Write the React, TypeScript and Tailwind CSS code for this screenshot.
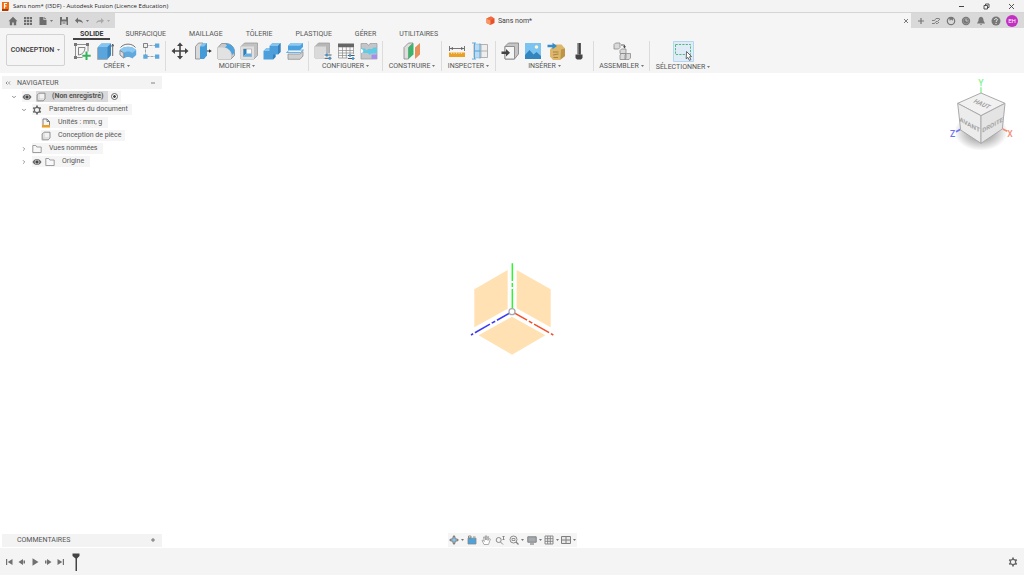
import type { ReactNode } from 'react';
import { ChevronDown, ChevronRight } from 'lucide-react';

function Icon({ children, size = 'size-[18px]', box = '0 0 18 18' }: { children: ReactNode; size?: string; box?: string }) {
  return (
    <svg viewBox={box} className={`${size} shrink-0`} fill="none" aria-hidden="true">
      {children}
    </svg>
  );
}

function Caret({ tone = 'text-[#777]' }: { tone?: string }) {
  return (
    <svg viewBox="0 0 6 4" className={`h-[2px] w-[3px] shrink-0 ${tone}`} aria-hidden="true">
      <path d="M0 0h6L3 4z" fill="currentColor" />
    </svg>
  );
}

const small = 'size-[10px]';

/* Ribbon icons */

const SketchIcon = () => (
  <Icon>
    <path d="M2.5 2.5h12M2.5 2.5v13M15 2.5v7M2.5 15.5h7" stroke="#777" strokeWidth=".8" />
    <path d="M5.5 13V5.5h6.500c0 4-2.500 7-6.500 7.500z" stroke="#777" strokeWidth=".9" />
    <path d="M1 1h3v3H1zM13 1h3v3h-3zM1 14h3v3H1z" fill="#777" />
    <path d="M12.500 9.500h2v3.200h3.200v2h-3.200V18h-2v-3.300H9.300v-2h3.200z" fill="#35b35a" />
  </Icon>
);

const ExtrudeIcon = () => (
  <Icon>
    <path d="M2 5 5.500 1.500h9.500v11.500L11.500 17H2z" fill="#5aa5dc" />
    <path d="M2 5 5.500 1.500h9.500L11.500 5z" fill="#85c4f0" />
    <path d="M11.500 5 15 1.500v11.500L11.500 17z" fill="#3c86bf" />
    <path d="M1.500 5.500v12H11.500" stroke="#999" strokeWidth=".8" />
    <path d="M16.700 14V3m-1.200 1.500L16.700 2l1.200 2.500" stroke="#444" strokeWidth=".8" />
  </Icon>
);

const RevolveIcon = () => (
  <Icon>
    <path d="M1.500 5.500C5 1 13 1 16.500 5.500" stroke="#777" strokeWidth="1" />
    <path d="M.8 8c4-4.500 12.400-4.500 16.400 0v5l-4 3.500c-2-2-6.400-2-8.400 0L.8 13z" fill="#5fa9df" />
    <path d="M.8 8c4-4.500 12.400-4.500 16.400 0l-4 3c-2-2-6.400-2-8.400 0z" fill="#8ac8f2" />
    <path d="M1 8.500 4.800 11v5L1 13z" fill="#dcdcdc" stroke="#777" strokeWidth=".7" />
  </Icon>
);

const PatternIcon = () => (
  <Icon>
    <path d="M3.500 3.500h12M3.500 3.500v11h12" stroke="#999" strokeWidth=".9" strokeDasharray="3 1" />
    <path d="M1.500 1.500h4v4h-4z" fill="#eee" stroke="#777" strokeWidth=".9" />
    <path d="M13 1.500h4.300v4.300H13zM1.300 12.500h4.300v4.300H1.300zM13 12.500h4.300v4.300H13z" fill="#5ca7dd" />
  </Icon>
);

const MoveIcon = () => (
  <Icon>
    <path d="M9 2.500v13M2.500 9h13" stroke="#444" strokeWidth="1.600" />
    <path d="M9 .5 12 4H6zM9 17.500 6 14h6zM.5 9 4 6v6zM17.500 9 14 12V6z" fill="#444" />
  </Icon>
);

const PressPullIcon = () => (
  <Icon>
    <path d="M1.500 4.500 4.500 1H9v12.500L6 17H1.500z" fill="#d9d9d9" stroke="#888" strokeWidth=".8" />
    <path d="M6 4.500 9 1h4v12.500L10 17H6z" fill="#439bd8" />
    <path d="M6 4.500 9 1h4l-3 3.500z" fill="#83c3ee" />
    <path d="M13 9h3" stroke="#333" />
    <path d="m15 7.200 2.800 1.800L15 10.800z" fill="#333" />
  </Icon>
);

const FilletIcon = () => (
  <Icon>
    <path d="M1 17V5.500L4.500 1.500H9c5 0 8.500 4 8.500 8v4L14 17z" fill="#c9c9c9" stroke="#888" strokeWidth=".8" />
    <path d="M1 5.500h4.500c5 0 8.500 3.500 8.500 8V17H1z" fill="#e2e2e2" />
    <path d="M8 1.500h1c5 0 8.500 4 8.500 8v1.500L15 13c-.5-3.500-3-6.500-7-7.500l2-2z" fill="#4ba3df" />
  </Icon>
);

const ShellIcon = () => (
  <Icon>
    <path d="M1 4.500 4.500 1h13v12.500L14 17H1z" fill="#c2c2c2" stroke="#9b9b9b" strokeWidth=".8" />
    <path d="M1 4.500h13V17H1z" fill="#e0e0e0" />
    <path d="M3.500 7h8v7.500h-8z" fill="#fff" stroke="#999" strokeWidth=".6" />
    <path d="M3.500 7h3v4.500l-3 3z" fill="#2f7fb8" />
    <path d="m3.500 14.500 3-3h5v3z" fill="#62b1e6" />
  </Icon>
);

const CombineIcon = () => (
  <Icon>
    <path d="M.5 9 3.500 6h3V4L9.500 1h8v9L15 12.500h-2.500v2.500L10 17.500H.5z" fill="#4c9fda" />
    <path d="M6.500 4 9.500 1h8L15 4zM.5 9 3.500 6h3v3z" fill="#84c4ef" />
    <path d="M15 4 17.500 1v9L15 12.500zM12.500 12.500v2.500L10 17.500v-5z" fill="#367fb8" />
  </Icon>
);

const SplitIcon = () => (
  <Icon>
    <path d="M2 3.800 5 1h12v4l-3 3H2z" fill="#4ba1dd" />
    <path d="M2 3.800 5 1h12l-3 2.800z" fill="#8dcaf2" />
    <path d="M.5 10.500 3.500 8h14l-3 2.500z" fill="#e7f4fd" stroke="#4ba1dd" strokeWidth=".8" />
    <path d="M2 12h12l3-2.500V14l-3 3.300H2z" fill="#cfcfcf" stroke="#888" strokeWidth=".7" />
  </Icon>
);

const ConfigureIcon = () => (
  <Icon>
    <path d="M1 4.500 4.500 1h11v11L12 16H1z" fill="#b7b7b7" stroke="#999" strokeWidth=".7" />
    <path d="M1 4.500h11V16H1z" fill="#dadada" />
    <path d="M10 11.500h8V18h-8z" fill="#f5f5f5" />
    <path d="M10.500 13h7M10.500 16.300h7" stroke="#555" strokeWidth="1" />
    <path d="M11.800 11.500h2v3h-2zM14.800 14.800h2v3h-2z" fill="#3d94d1" />
  </Icon>
);

const ConfigTableIcon = () => (
  <Icon>
    <path d="M1.500 5h15v11h-15zM1.500 8.500h15M1.500 11h15M1.500 13.500h15M5.500 5v11M9.300 5v11M13 5v11" fill="#fafafa" stroke="#888" strokeWidth=".7" />
    <path d="M1 1.500h16v3.500H1z" fill="#666" />
    <path d="M10.500 12h7.500v6h-7.500z" fill="#f5f5f5" />
    <path d="M11 13.500h6.500M11 16.500h6.500" stroke="#555" />
    <path d="M12 12.300h2v2.500h-2zM15 15.300h2v2.500h-2z" fill="#3d94d1" />
  </Icon>
);

const PuzzleIcon = () => (
  <Icon>
    <path d="M1 1.500h6l1.500 2 1.500-2h7V17H1z" fill="#c3c5c9" stroke="#999" strokeWidth=".7" />
    <path d="M1 6.500h4l1.500 2L8 7h4l1.500-1.500H17v6h-6l-1.500 1.500L8 11H1z" fill="#5fcbe4" />
    <path d="M11.500 12.500H17v4.300h-5.500z" fill="#a48cf0" />
    <path d="M1 7c3 0 3 4 0 4z" fill="#fff" />
  </Icon>
);

const PlaneIcon = () => (
  <Icon>
    <path d="M1 5.500 5.500 1H10L5.500 5.500V17H1z" fill="#ddd" stroke="#888" strokeWidth=".8" />
    <path d="m5.500 5.500 5-4.500v11.500l-5 4.500z" fill="#3bb56c" />
    <path d="m12 5.500 5-4.500v11.500L12 17z" fill="#e8905a" />
  </Icon>
);

const MeasureIcon = () => (
  <Icon>
    <path d="M1.500 4v5M16.500 4v5M2 6.500h14" stroke="#666" strokeWidth=".9" />
    <path d="m2 6.500 3-1.600v3.200zM16 6.500l-3-1.600v3.200z" fill="#666" />
    <path d="M1 10.500h16V15H1z" fill="#eba021" />
    <path d="M3.500 10.500v1.500M6 10.500v1.500M8.500 10.500v1.500M11 10.500v1.500M13.500 10.500v1.500" stroke="#fff" strokeWidth=".6" />
  </Icon>
);

const SectionIcon = () => (
  <Icon>
    <path d="M3 2.500h13.500v13H3zM3 9h13.500M10 2.500v13" fill="#eee" stroke="#aaa" strokeWidth=".9" />
    <path d="M4 1.500h5v15H4z" fill="#a9d4f1" fillOpacity=".75" />
    <path d="M1 1h4M1 17h4M3.500 1v16M9 1.500v15M3.500 9H9" stroke="#55a3da" strokeWidth=".9" />
  </Icon>
);

const InsertIcon = () => (
  <Icon>
    <path d="M4 4.500 7.500 1h10v11L13.500 17H4z" fill="#c5c5c5" stroke="#888" strokeWidth=".9" />
    <path d="M4 4.500h9.500V17H4z" fill="#f5f5f5" stroke="#888" strokeWidth=".9" />
    <path d="M.5 9.500h4.500V7l4 3.800-4 3.700V12H.500z" fill="#444" />
  </Icon>
);

const ImageIcon = () => (
  <Icon>
    <path d="M1 1h16v16H1z" fill="#7bc3f0" />
    <path d="m1 13 4.500-5 4 4.500L12.500 10l4.500 4v3H1z" fill="#3386bd" />
    <circle cx="12.500" cy="5" r="1.800" fill="#fff5cf" />
  </Icon>
);

const StoreIcon = () => (
  <Icon>
    <path d="M3 7.500 7.500 2.500h7l3.500 4v7.500l-5 4H6l-3-3.500z" fill="#dcb76c" />
    <path d="m14 7.500 4-1v7.500l-4.500 3.500z" fill="#bd9448" />
    <path d="M6 10h5.500M6 13l5.500-1M6.500 15.500H11" stroke="#9a7537" strokeWidth=".8" />
    <path d="M.5 2.800h5V.8L10 4 5.500 7.300v-2h-5z" fill="#348dcb" />
  </Icon>
);

const BoltIcon = () => (
  <Icon>
    <path d="M7.300 1h3.400v11.500H7.300z" fill="#777" />
    <path d="M9 1h1.700v11.500H9z" fill="#444" />
    <path d="M5.500 12.500h7v3.500L11 17.500H7L5.500 16z" fill="#444" />
  </Icon>
);

const AssembleIcon = () => (
  <Icon>
    <g fill="#dadada" stroke="#8a8a8a" strokeWidth=".8">
      <path d="m1 2.500 1.500-1.500H7v4.500L5.500 7H1z" />
      <path d="M7 8.500 8.500 7H13v4.500H7zM7 13l1.500-1.500H13V16l-1 1.500H7zM12 13l1.500-1.500h4V16l-1.500 1.500h-4z" />
    </g>
    <path d="M8 3h3.500v2" stroke="#555" strokeWidth=".9" />
    <path d="M10 4.300h3L11.500 6.500z" fill="#444" />
  </Icon>
);

const SelectIcon = () => (
  <Icon size="size-[21px]" box="0 0 21 21">
    <path d="M.5.500h20v20H.500z" fill="#dfecf7" stroke="#b5d6ef" />
    <path d="M2.500 3.500h15v10h-15z" stroke="#4fb978" strokeDasharray="2.200 1.200" />
    <path d="m13.500 10.500 5 5-2 .3 1.400 2.800-1.500.8-1.500-3-1.700 1.400z" fill="#fff" stroke="#444" strokeWidth=".8" />
  </Icon>
);

type Group = { label: string; width: string; tools: [string, () => ReactNode][] };

const groups: Group[] = [
  { label: 'CRÉER', width: 'w-[98px]', tools: [['Esquisse', SketchIcon], ['Extrusion', ExtrudeIcon], ['Révolution', RevolveIcon], ['Réseau', PatternIcon]] },
  { label: 'MODIFIER', width: 'w-[143px]', tools: [['Déplacer', MoveIcon], ['Appuyer/Tirer', PressPullIcon], ['Congé', FilletIcon], ['Coque', ShellIcon], ['Combiner', CombineIcon], ['Scinder', SplitIcon]] },
  { label: 'CONFIGURER', width: 'w-[74px]', tools: [['Configurer', ConfigureIcon], ['Table', ConfigTableIcon], ['Règles', PuzzleIcon]] },
  { label: 'CONSTRUIRE', width: 'w-[59px]', tools: [['Plan', PlaneIcon]] },
  { label: 'INSPECTER', width: 'w-[54px]', tools: [['Mesurer', MeasureIcon], ['Coupe', SectionIcon]] },
  { label: 'INSÉRER', width: 'w-[98px]', tools: [['Insérer', InsertIcon], ['Image', ImageIcon], ['Catalogue', StoreIcon], ['Fixation', BoltIcon]] },
  { label: 'ASSEMBLER', width: 'w-[56px]', tools: [['Assembler', AssembleIcon]] },
  { label: 'SÉLECTIONNER', width: 'w-[66px]', tools: [['Sélectionner', SelectIcon]] },
];

const tabs = ['SOLIDE', 'SURFACIQUE', 'MAILLAGE', 'TÔLERIE', 'PLASTIQUE', 'GÉRER', 'UTILITAIRES'];

function TitleBar() {
  return (
    <header className="flex h-3 items-center bg-[#f3f3f3] pl-[1px] font-['Open_Sans',sans-serif] text-[6px] text-[#222]">
      <Icon size="size-[9px]" box="0 0 9 9">
        <path d="M1 0h7v8L7 9H1z" fill="#f06a12" />
        <path d="M1 7h6v2H1z" fill="#a83a06" />
        <path d="M3.500 6.500v-5H6M3.500 4h2" stroke="#fff" strokeWidth="1.200" />
      </Icon>
      <h1 className="ml-[3px] leading-[10px]">Sans nom* (I3DF) - Autodesk Fusion (Licence Education)</h1>
      <div className="ml-auto flex gap-[18px] pr-[9px] text-[#444]">
        <button aria-label="Réduire"><Icon size="size-[7px]" box="0 0 7 7"><path d="M1 3.500h5" stroke="currentColor" /></Icon></button>
        <button aria-label="Restaurer"><Icon size="size-[7px]" box="0 0 7 7"><path d="M1 2.500h3.500V6H1zM2.500 2.500V1H6v3.500H4.500" stroke="currentColor" strokeWidth=".9" /></Icon></button>
        <button aria-label="Fermer"><Icon size="size-[7px]" box="0 0 7 7"><path d="m1 1 5 5M6 1 1 6" stroke="currentColor" strokeWidth=".9" /></Icon></button>
      </div>
    </header>
  );
}

function DocumentBar() {
  return (
    <div className="flex h-4 border-t border-[#d5d5d5] bg-[#d9d9d9] text-[#6d6d6d]">
      <div className="flex w-[115px] shrink-0 items-center pl-2">
        <button aria-label="Accueil">
          <Icon size={small} box="0 0 10 10"><path d="M5 .8.500 5.200H1.800V9.300h2.400V6.400h1.600v2.900h2.400V5.200h1.300z" fill="currentColor" /></Icon>
        </button>
        <button aria-label="Données" className="ml-[5px]">
          <Icon size={small} box="0 0 10 10"><path d="M1 1h2.200v2.200H1zM3.900 1h2.200v2.200H3.900zM6.800 1H9v2.200H6.800zM1 3.900h2.200v2.200H1zM3.900 3.900h2.200v2.200H3.900zM6.800 3.900H9v2.200H6.800zM1 6.800h2.200V9H1zM3.900 6.800h2.200V9H3.900zM6.800 6.800H9V9H6.800z" fill="currentColor" /></Icon>
        </button>
        <button aria-label="Fichier" className="ml-[5px] flex items-center gap-[2px]">
          <Icon size={small} box="0 0 10 10"><path d="M1.500 1h4v3h3v5h-7zM6.300 1l2.200 2.300H6.300z" fill="currentColor" /></Icon>
          <Caret />
        </button>
        <button aria-label="Enregistrer" className="ml-[6px]">
          <Icon size={small} box="0 0 10 10"><path d="M1 1h8v8H1z" fill="currentColor" /><path d="M3 1h4v2.500H3zM2.500 5.500h5V9h-5z" fill="#d9d9d9" /><path d="M3.500 7h3" stroke="currentColor" /></Icon>
        </button>
        <button aria-label="Annuler" className="ml-[5px] flex items-center gap-[2px]">
          <Icon size={small} box="0 0 10 10"><path d="M4 1.500v2c3 0 4.700 1.300 5 4-1.200-1.500-2.500-2-5-2v2L1 4.500z" fill="currentColor" /></Icon>
          <Caret />
        </button>
        <button aria-label="Rétablir" className="ml-[6px] flex items-center gap-[2px] text-[#aaa]">
          <Icon size={small} box="0 0 10 10"><path d="M6 2v2C3 4 1.500 5 1 7.500c1.200-1.300 2.500-1.700 5-1.700v2L9 4.800z" fill="currentColor" /></Icon>
          <Caret tone="text-[#aaa]" />
        </button>
      </div>
      <div className="flex flex-1 items-center bg-[#f5f5f5] pr-[2px]">
        <div className="flex flex-1 items-center justify-center gap-[3px] leading-[10px] text-[#444]">
          <Icon size="size-[9px]" box="0 0 9 9">
            <path d="M.5 2.500 5 .5 8.500 2.500V7L4.500 9 .5 7z" fill="#e9502a" />
            <path d="m.5 2.500 4 1.800V9l-4-2z" fill="#f79a62" />
            <path d="m.5 2.500 4.500-2 3.500 2-4 1.800z" fill="#f26a3d" />
          </Icon>
          Sans nom*
        </div>
        <button aria-label="Fermer l'onglet"><Icon size="size-[6px]" box="0 0 6 6"><path d="m1 1 4 4M5 1 1 5" stroke="currentColor" strokeWidth=".9" /></Icon></button>
      </div>
      <div className="flex shrink-0 items-center gap-[5px] pr-[6px] pl-[5px] text-[#777]">
        <button aria-label="Nouvel onglet"><Icon size={small} box="0 0 10 10"><path d="M5 2v6M2 5h6" stroke="currentColor" strokeWidth="1.200" /></Icon></button>
        <button aria-label="Extensions"><Icon size={small} box="0 0 10 10"><path d="M1 4.500h2.500L5 2.500h3.500M1 7.500h2.500L5 5.500h1.500L9 3M5 7.500h1.500L8 6" stroke="currentColor" strokeWidth=".9" /></Icon></button>
        <button aria-label="Mises à jour"><Icon size={small} box="0 0 10 10"><circle cx="5" cy="5" r="3.700" stroke="currentColor" strokeWidth="1.200" /><path d="M3 1.500 7 1.500v3.200L5 3.500 3.800 5z" fill="currentColor" /></Icon></button>
        <button aria-label="Tâches"><Icon size={small} box="0 0 10 10"><circle cx="5" cy="5" r="4.200" fill="currentColor" /><circle cx="5" cy="5" r="2.900" stroke="#aaa" strokeWidth=".5" /><path d="M5 2.800V5h1.800" stroke="#ddd" strokeWidth=".8" /></Icon></button>
        <button aria-label="Notifications"><Icon size={small} box="0 0 10 10"><path d="M5 .8c2 .4 2.500 2 2.500 3.700L9 7.500H1l1.500-3C2.500 2.800 3 1.200 5 .8zM4 8h2L5 9.300z" fill="currentColor" /></Icon></button>
        <button aria-label="Aide"><Icon size={small} box="0 0 10 10"><circle cx="5" cy="5" r="4.500" fill="currentColor" /><path d="M3.600 4c0-2 2.900-1.800 2.800-.2C6.300 4.800 5 4.800 5 6M5 6.900V8" stroke="#eee" strokeWidth="1" /></Icon></button>
        <button className="flex size-3 items-center justify-center rounded-full bg-[#c22fc2] text-[6px] leading-none text-white">EH</button>
      </div>
    </div>
  );
}

function Ribbon() {
  return (
    <div className="flex h-[45px] bg-[#f5f5f5]">
      <button className="mt-[6px] ml-[6px] flex h-8 w-[59px] shrink-0 items-center justify-center gap-[3px] rounded-[2px] border border-[#d2d2d2] font-medium text-[#333]">
        CONCEPTION <Caret />
      </button>
      <div className="ml-[3px] flex flex-col">
        <nav className="flex gap-[7px] pt-[2px] pl-[5px]">
          {tabs.map((tab, i) => (
            <button
              key={tab}
              className={
                i === 0
                  ? 'h-[10px] border-b-2 border-[#444] px-[7px] leading-[8px] font-bold text-[#333]'
                  : 'h-[10px] border-b-2 border-transparent px-2 leading-[8px]'
              }
            >
              {tab}
            </button>
          ))}
        </nav>
        <div className="flex pt-px">
          {groups.map(({ label, width, tools }) => (
            <section key={label} className={`${width} flex h-[30px] shrink-0 flex-col items-center border-r border-[#dcdcdc] last:border-r-0`}>
              <div className="flex h-[21px] items-center gap-[5px]">
                {tools.map(([name, Tool]) => (
                  <button key={name} aria-label={name}><Tool /></button>
                ))}
              </div>
              <button className="flex items-center gap-[2px] leading-[10px]">
                {label} <Caret />
              </button>
            </section>
          ))}
        </div>
      </div>
    </div>
  );
}

const BodyIcon = () => (
  <Icon size={small} box="0 0 10 10">
    <path d="M1.200 3 3 1.200h6V7L7.200 8.800h-6z" fill="#f2f2f2" stroke="#777" strokeWidth=".8" />
    <path d="M3 1.200V7L1.200 8.800M3 7h6" stroke="#bbb" strokeWidth=".6" />
  </Icon>
);

const UnitsIcon = () => (
  <Icon size={small} box="0 0 10 10">
    <path d="M2 7V1h4l2.500 2.500V7M6 1v2.500h2.500" stroke="#777" strokeWidth=".9" />
    <path d="M1 7h8v2.500H1z" fill="#eba021" />
  </Icon>
);

const EyeIcon = () => (
  <Icon size={small} box="0 0 10 10">
    <path d="M.5 5C2.500 1 7.500 1 9.500 5 7.500 9 2.500 9 .5 5z" fill="#666" />
    <circle cx="5" cy="5" r="2" fill="#444" stroke="#eee" strokeWidth=".7" />
  </Icon>
);

const FolderIcon = () => (
  <Icon size={small} box="0 0 10 10">
    <path d="M.8 8.500V1.500h3l1 1.500h4.400v5.500z" fill="#f8f8f8" stroke="#888" strokeWidth=".8" />
  </Icon>
);

const GearIcon = () => (
  <Icon size={small} box="0 0 10 10">
    <circle cx="5" cy="5" r="2.700" stroke="#666" strokeWidth="1.200" />
    <path d="M5 .6v1.600M5 7.800v1.600M1.200 2.800l1.400.8M7.400 6.400l1.400.8M1.200 7.200l1.400-.8M7.400 3.600l1.400-.8" stroke="#666" strokeWidth="1.700" />
  </Icon>
);

const OpenIcon = () => <ChevronDown className="size-[6px] shrink-0 text-[#666]" strokeWidth={3} />;
const ClosedIcon = () => <ChevronRight className="size-[6px] shrink-0 text-[#777]" strokeWidth={3} />;

function Browser() {
  return (
    <aside className="w-[162px]">
      <div className="mt-[3px] ml-[2px] flex h-[13px] items-center bg-[#f3f3f3] pr-[6px] pl-[3px]">
        <button aria-label="Replier"><Icon size="size-[6px]" box="0 0 6 6"><path d="M2.500 1.500 1 3l1.500 1.500M5 1.500 3.500 3 5 4.500" stroke="#777" strokeWidth=".8" /></Icon></button>
        <h2 className="ml-[6px] flex-1">NAVIGATEUR</h2>
        <button aria-label="Réduire le navigateur"><Icon size="size-[6px]" box="0 0 6 6"><path d="M1 3h4" stroke="#666" strokeWidth=".8" /></Icon></button>
      </div>
      <ul className="pt-px leading-[11px]">
        <li className="flex h-[13px] items-center pl-[11px]">
          <OpenIcon />
          <div className="ml-[5px] flex h-[11px] items-center bg-[#f5f5f5]">
            <EyeIcon />
            <span className="ml-[4px] flex h-[11px] items-center gap-[6px] bg-[#d9d9d9] pr-1 font-bold">
              <BodyIcon /> (Non enregistré)
            </span>
            <input type="radio" name="active" aria-label="Activer le composant" defaultChecked className="mr-[3px] ml-[3px] size-[7px] appearance-none rounded-full border border-[#666] bg-[radial-gradient(circle,#444_30%,#fff_45%)]" />
          </div>
        </li>
        <li className="flex h-[13px] items-center pl-[21px]">
          <OpenIcon />
          <span className="ml-[5px] flex h-[11px] items-center gap-[7px] bg-[#f5f5f5] pr-1"><GearIcon /> Paramètres du document</span>
        </li>
        <li className="flex h-[13px] items-center pl-[41px]">
          <span className="flex h-[11px] items-center gap-[7px] bg-[#f5f5f5] pr-[6px]"><UnitsIcon /> Unités : mm, g</span>
        </li>
        <li className="flex h-[13px] items-center pl-[41px]">
          <span className="flex h-[11px] items-center gap-[7px] bg-[#f5f5f5] pr-1"><BodyIcon /> Conception de pièce</span>
        </li>
        <li className="flex h-[13px] items-center pl-[21px]">
          <ClosedIcon />
          <span className="ml-[5px] flex h-[11px] items-center gap-[7px] bg-[#f5f5f5] pr-[6px]"><FolderIcon /> Vues nommées</span>
        </li>
        <li className="flex h-[13px] items-center pl-[21px]">
          <ClosedIcon />
          <span className="ml-[5px] flex h-[11px] items-center bg-[#f5f5f5] pr-[6px]">
            <EyeIcon /> <span className="ml-[3px] flex items-center gap-[7px]"><FolderIcon /> Origine</span>
          </span>
        </li>
      </ul>
    </aside>
  );
}

function ViewCube() {
  return (
    <svg viewBox="0 0 270 240" className="mt-px h-20 w-[90px] font-bold" aria-label="ViewCube">
      <defs>
        <radialGradient id="shade">
          <stop offset=".45" stopColor="#999" stopOpacity=".75" />
          <stop offset="1" stopColor="#999" stopOpacity="0" />
        </radialGradient>
      </defs>
      <ellipse cx="141" cy="174" rx="80" ry="56" fill="url(#shade)" />
      <path d="M141 40v18" stroke="#7df58a" strokeWidth="4" />
      <path d="m66 173 14-7" stroke="#6f6ff5" strokeWidth="5" />
      <path d="m206 165 14 7" stroke="#f58c78" strokeWidth="5" />
      <g stroke="#aaa" strokeWidth="3" strokeLinejoin="round">
        <path d="m141 57 72 31-72 37-70-37z" fill="#f1f1f1" />
        <path d="m71 88 70 37v83l-61-40z" fill="#ececec" />
        <path d="m213 88-72 37v83l64-43z" fill="#e4e4e4" />
      </g>
      <g fill="#a2a2a2" fontSize="19" textAnchor="middle">
        <text transform="translate(139 95) rotate(24) skewX(-22)">HAUT</text>
        <text transform="translate(107 159) skewY(29)">AVANT</text>
        <text transform="translate(176 159) skewY(-29)" fontSize="18">DROITE</text>
      </g>
      <g fontSize="26" textAnchor="middle" fontWeight="500">
        <text x="141" y="36" fill="#7df58a">Y</text>
        <text x="56" y="188" fill="#6f6ff5">Z</text>
        <text x="228" y="188" fill="#f58c78">X</text>
      </g>
    </svg>
  );
}

function OriginPlanes() {
  return (
    <svg viewBox="0 0 300 330" className="h-[110px] w-[100px]" aria-label="Origine">
      <g fill="#ffe1b3">
        <path d="M37 103 137 45v116L37 217z" />
        <path d="m164 45 102 58v114l-102-57z" />
        <path d="m150 185 100 56-100 58-100-58z" />
      </g>
      <g strokeWidth="4.500" fill="none">
        <path d="M151 170V25" stroke="#2ef52e" strokeDasharray="68 6 12 6" />
        <path d="M150 170 27 240" stroke="#3b3bf2" strokeDasharray="52 6 12 6" />
        <path d="m150 170 124 70" stroke="#f24e28" strokeDasharray="52 6 12 6" />
      </g>
      <circle cx="150" cy="170" r="9" fill="#fff" stroke="#aaa" strokeWidth="4" />
    </svg>
  );
}

function ViewTools() {
  return (
    <div className="flex h-[14px] items-center bg-[#f5f5f5] px-[1px] text-[#808080]">
      <button aria-label="Orbite" className="flex items-center gap-[2px]">
        <Icon size={small} box="0 0 10 10"><path d="M5 0 7 2.500H3zM5 10 3 7.500h4zM0 5l2.500-2v4zM10 5 7.500 7V3z" fill="currentColor" /><circle cx="5" cy="5" r="2.300" fill="#8cc4e8" stroke="#777" strokeWidth=".8" /></Icon>
        <Caret />
      </button>
      <button aria-label="Regarder" className="ml-[3px]"><Icon size={small} box="0 0 10 10"><path d="M1 3.200h8V9H1z" fill="#4ca2dc" stroke="#888" strokeWidth=".8" /><path d="M1.500 1h2.500v2H1.500zM6 2h2.500" stroke="#777" strokeWidth=".8" /></Icon></button>
      <button aria-label="Panoramique" className="ml-1"><Icon size={small} box="0 0 10 10"><path d="M3 9.500 1 5.500l1-.4 1.300 1.500L2.500 2l1-.2L4.500 5V.8h1L5.800 5l.9-3.500 1 .2L7 5.500 8.500 3.500l.9.500L7.500 9.500z" fill="#fff" stroke="#999" strokeWidth=".8" /></Icon></button>
      <button aria-label="Zoom" className="ml-1"><Icon size={small} box="0 0 10 10"><circle cx="3.700" cy="5" r="2.500" stroke="currentColor" strokeWidth=".9" /><path d="m5.500 7 2.500 2.500M8.500 1v4M7.500 2l1-1 1 1M7.500 4l1 1 1-1" stroke="currentColor" strokeWidth=".9" /></Icon></button>
      <button aria-label="Ajuster" className="ml-1 flex items-center gap-[2px]">
        <Icon size={small} box="0 0 10 10"><circle cx="4.500" cy="4.500" r="3.500" stroke="currentColor" strokeWidth=".9" /><path d="M3 3.500h3v2H3z" stroke="currentColor" strokeWidth=".8" /><path d="m7 7 2.500 2.500" stroke="currentColor" strokeWidth="1.200" /></Icon>
        <Caret />
      </button>
      <button aria-label="Affichage" className="ml-[3px] flex items-center gap-[2px]">
        <Icon size={small} box="0 0 10 10"><path d="M.8 1.800h8.400v5.400H.800z" fill="#a5abb0" stroke="currentColor" /><path d="M3 9h4" stroke="currentColor" strokeWidth="1.200" /></Icon>
        <Caret />
      </button>
      <button aria-label="Grille" className="ml-[2px] flex items-center gap-[2px]">
        <Icon size={small} box="0 0 10 10"><path d="M1 1h8v8H1zM3.700 1v8M6.300 1v8M1 3.700h8M1 6.300h8" stroke="currentColor" strokeWidth=".9" /></Icon>
        <Caret />
      </button>
      <button aria-label="Fenêtres" className="ml-[2px] flex items-center gap-[2px]">
        <Icon size={small} box="0 0 10 10"><path d="M.5 1.500h9v7h-9zM5 1.500v7M.5 5h9" fill="#e8e8e8" stroke="currentColor" /></Icon>
        <Caret />
      </button>
    </div>
  );
}

const playback: [string, string][] = [
  ['Début', 'M1 1h1.200v6H1zM7.500 1v6L2.700 4z'],
  ['Précédent', 'M5 1v6L.5 4zM5.500 2.500H7v3H5.500z'],
  ['Lire', 'M1.500.3v7.400L7.500 4z'],
  ['Suivant', 'M3 1v6l4.500-3zM1 2.500h1.500v3H1z'],
  ['Fin', 'M5.800 1H7v6H5.800zM.5 1v6l4.800-3z'],
];

function Timeline() {
  return (
    <footer className="flex h-[27px] items-center bg-[#f4f4f4] pr-[6px] pl-[5px] text-[#707070]">
      <div className="flex gap-[5px]">
        {playback.map(([name, d]) => (
          <button key={name} aria-label={name}><Icon size="size-2" box="0 0 8 8"><path d={d} fill="currentColor" /></Icon></button>
        ))}
      </div>
      <button aria-label="Marqueur" className="ml-[7px]">
        <Icon size="h-[18px] w-2" box="0 0 8 18"><path d="M.5.500h7V3L5 5.500V18H3.500V5.500L.500 3z" fill="#444" /></Icon>
      </button>
      <button aria-label="Préférences" className="ml-auto"><GearIcon /></button>
    </footer>
  );
}

export default function App() {
  return (
    <div className="flex min-h-screen flex-col overflow-hidden bg-white font-[Roboto,sans-serif] text-[7px] leading-[8px] text-[#555] [&_button]:shrink-0">
      <TitleBar />
      <DocumentBar />
      <Ribbon />
      <main className="relative flex flex-1 flex-col justify-between">
        {/* Model space, behind the floating panels */}
        <div className="absolute inset-0 flex items-center justify-center pb-[2px]">
          <OriginPlanes />
        </div>
        <div className="relative flex items-start justify-between">
          <Browser />
          <ViewCube />
        </div>
        <div className="relative grid grid-cols-[1fr_auto_1fr] items-center pb-px">
          <div className="ml-[2px] flex h-[13px] w-40 items-center justify-between bg-[#f3f3f3] pr-[6px] pl-[15px]">
            <h2>COMMENTAIRES</h2>
            <button aria-label="Ajouter un commentaire"><Icon size="size-[6px]" box="0 0 6 6"><path d="M3 1v4M1 3h4" stroke="#666" strokeWidth=".9" /></Icon></button>
          </div>
          <ViewTools />
        </div>
      </main>
      <Timeline />
    </div>
  );
}
